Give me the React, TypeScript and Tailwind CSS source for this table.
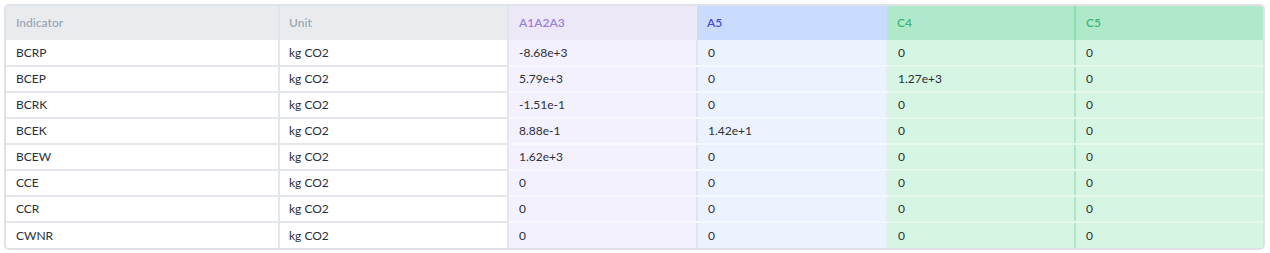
import React from "react";

type Row = {
  indicator: string;
  unit: string;
  a1a2a3: string;
  a5: string;
  c4: string;
  c5: string;
};

const rows: Row[] = [
  { indicator: "BCRP", unit: "kg CO2", a1a2a3: "-8.68e+3", a5: "0", c4: "0", c5: "0" },
  { indicator: "BCEP", unit: "kg CO2", a1a2a3: "5.79e+3", a5: "0", c4: "1.27e+3", c5: "0" },
  { indicator: "BCRK", unit: "kg CO2", a1a2a3: "-1.51e-1", a5: "0", c4: "0", c5: "0" },
  { indicator: "BCEK", unit: "kg CO2", a1a2a3: "8.88e-1", a5: "1.42e+1", c4: "0", c5: "0" },
  { indicator: "BCEW", unit: "kg CO2", a1a2a3: "1.62e+3", a5: "0", c4: "0", c5: "0" },
  { indicator: "CCE", unit: "kg CO2", a1a2a3: "0", a5: "0", c4: "0", c5: "0" },
  { indicator: "CCR", unit: "kg CO2", a1a2a3: "0", a5: "0", c4: "0", c5: "0" },
  { indicator: "CWNR", unit: "kg CO2", a1a2a3: "0", a5: "0", c4: "0", c5: "0" },
];

export default function App() {
  return (
    <div className="pt-[4px] pl-[4px] bg-white" style={{ fontFamily: "Lato, 'Noto Sans', sans-serif" }}>
      <div className="w-[1261px] rounded-[5px] border-2 border-[#dfe3e8] overflow-hidden">
        <table className="w-full table-fixed border-collapse text-[12px]">
          <colgroup>
            <col className="w-[273px]" />
            <col className="w-[229px]" />
            <col className="w-[189px]" />
            <col className="w-[190px]" />
            <col className="w-[188px]" />
            <col className="w-[188px]" />
          </colgroup>
          <thead>
            <tr className="h-[34px] text-left font-semibold">
              <th className="pl-[10px] font-semibold bg-[#e9ecef] text-[#9ca8b4] border-r-2 border-[#e1e4e8]">Indicator</th>
              <th className="pl-[9px] font-semibold bg-[#e9ecef] text-[#9ca8b4] border-r-2 border-[#e1e4e8]">Unit</th>
              <th className="pl-[10px] font-semibold bg-[#ece8f8] text-[#9a80d8]">A1A2A3</th>
              <th className="pl-[10px] font-semibold bg-[#c9dbfe] text-[#4a4fd0]">A5</th>
              <th className="pl-[10px] font-semibold bg-[#b0e9c9] text-[#3db87a] border-r-2 border-[#8fdcb0]">C4</th>
              <th className="pl-[10px] font-semibold bg-[#b0e9c9] text-[#3db87a]">C5</th>
            </tr>
          </thead>
          <tbody>
            {rows.map((r, i) => {
              const last = i === rows.length - 1;
              return (
                <tr key={r.indicator} className="h-[26px] text-[#2b2f36]">
                  <td className={`pl-[10px] bg-white border-r-2 border-[#e3e6ea] ${last ? "" : "border-b-2"}`}>{r.indicator}</td>
                  <td className={`pl-[9px] bg-white border-r-2 border-[#e3e6ea] ${last ? "" : "border-b-2"}`}>{r.unit}</td>
                  <td className={`pl-[10px] bg-[#f3f1fd] border-r-2 border-[#e6e0f7] ${last ? "" : "border-b-2 border-b-[#f8f7fe]"}`}>{r.a1a2a3}</td>
                  <td className={`pl-[10px] bg-[#ecf3fe] border-r-2 border-[#e2ecfc] ${last ? "" : "border-b-2 border-b-[#f4f8ff]"}`}>{r.a5}</td>
                  <td className={`pl-[10px] bg-[#d6f5e2] border-r-2 border-[#aee6c6] ${last ? "" : "border-b-2 border-b-[#e3f9eb]"}`}>{r.c4}</td>
                  <td className={`pl-[10px] bg-[#d6f5e2] ${last ? "" : "border-b-2 border-b-[#e3f9eb]"}`}>{r.c5}</td>
                </tr>
              );
            })}
          </tbody>
        </table>
      </div>
    </div>
  );
}
